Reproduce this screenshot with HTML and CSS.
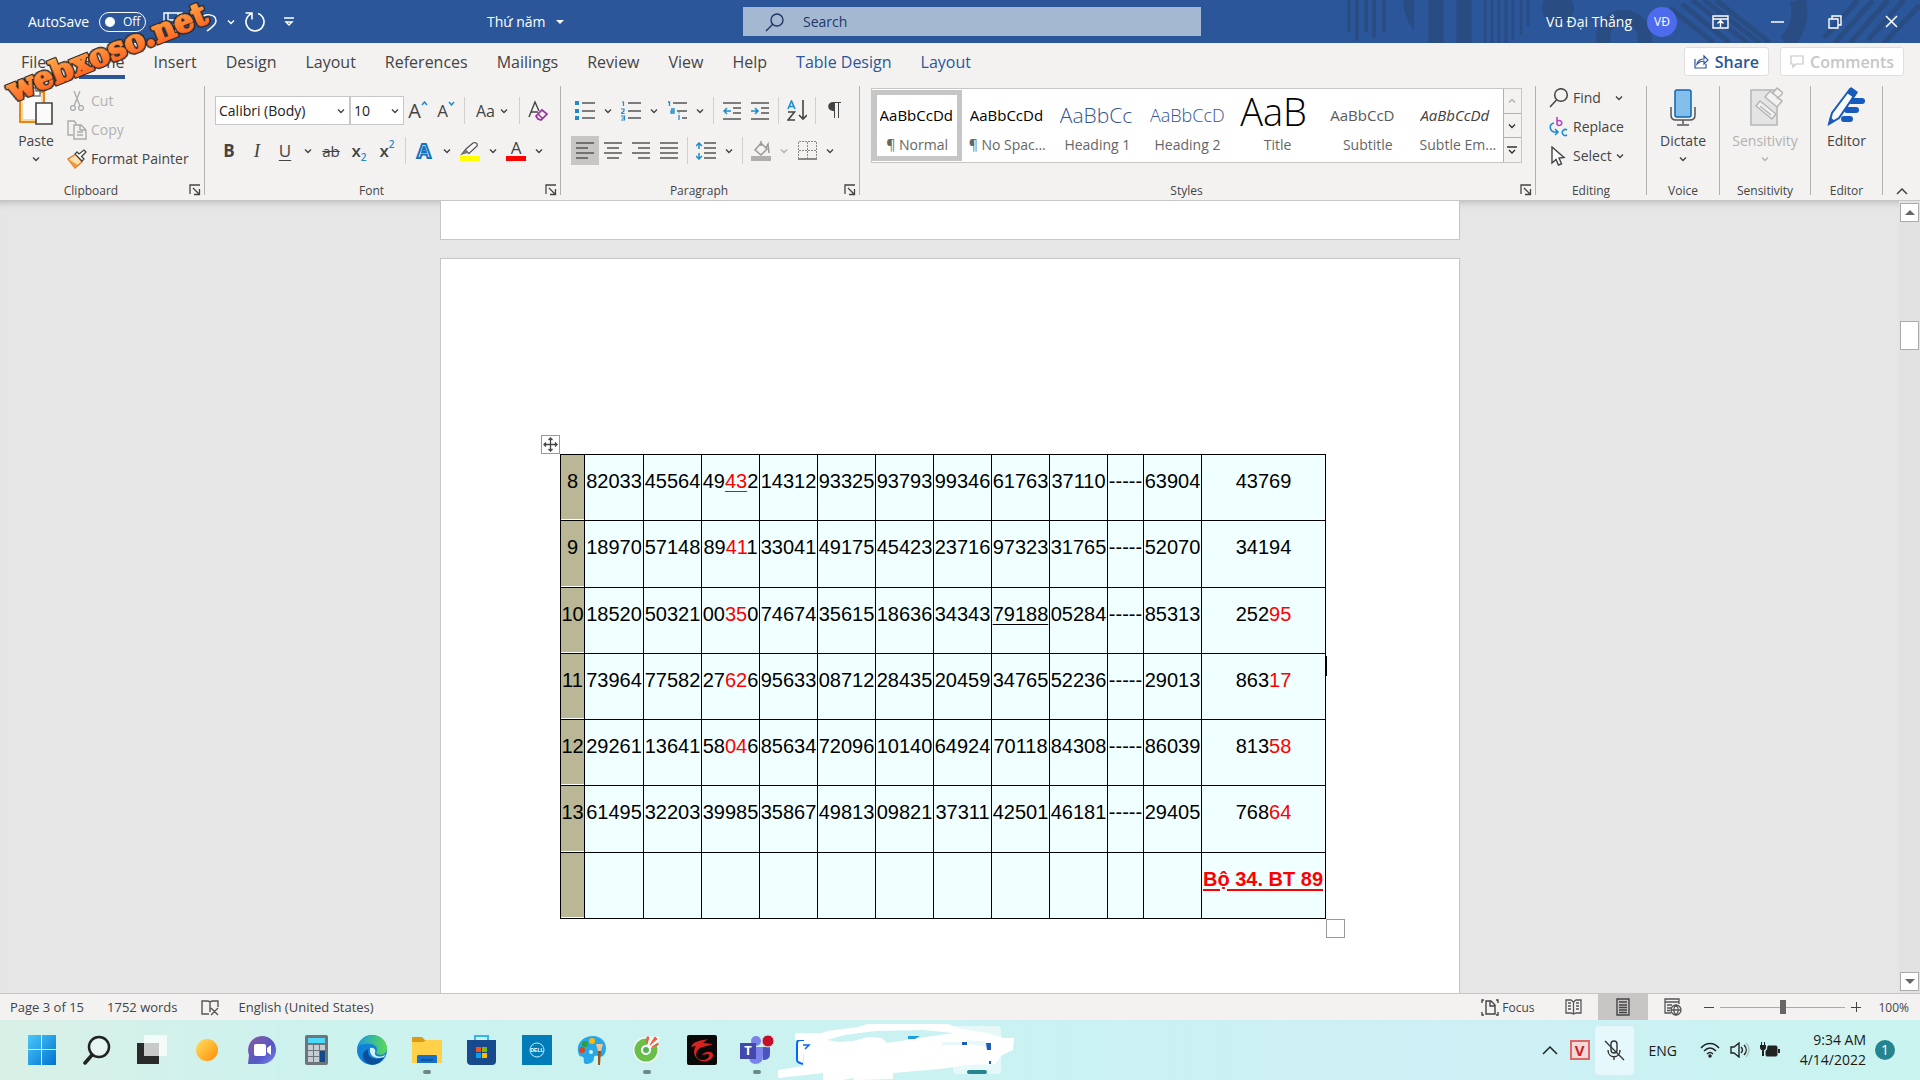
FILE: index.html
```html
<!DOCTYPE html>
<html lang="vi">
<head>
    <meta charset="UTF-8">
    <meta name="viewport" content="width=device-width, initial-scale=1.0">
    <title>Thứ năm - Word</title>
    <link rel="stylesheet" href="styles.css">
</head>
<body>
    <!-- Shared icons -->
    <svg class="defs" width="0" height="0">
        <symbol id="chev" viewBox="0 0 8 6"><path d="M1 1.5l3 3 3-3" fill="none" stroke="currentColor" stroke-width="1.4"/></symbol>
        <symbol id="launch" viewBox="0 0 12 12"><path d="M1 10V1h10M4 4l6 6M10.500 5v5.500H5" fill="none" stroke="currentColor" stroke-width="1.300"/></symbol>
    </svg>

    <header class="titlebar">
        <svg class="titlebar-art" width="580" height="43" viewBox="0 0 580 43" fill="none" stroke="#294c83">
            <path d="M9 0v32M17 0v41M26 0v32M34 0v38M44 0v32" stroke-width="4"/>
            <path d="M63 0h11v31Q64 18 63 0z" fill="#294c83" stroke="none"/>
            <path d="M96 0v43M124 0v43" stroke-width="15"/>
            <path d="M145 0v43M152 0v43M159 0v43M166 0v43M173 0v40M181 0v35M188 0v26" stroke-width="3"/>
            <circle cx="218" cy="8" r="16" fill="#294c83" stroke="none"/>
            <circle cx="284" cy="38" r="21" stroke-width="14"/>
            <path d="M330 8l44 35M342 4l48 39M352 0l56 43M364 0l56 43M376 0l54 43" stroke-width="5"/>
            <path d="M458 0Q464 24 446 43" stroke-width="16"/>
            <path d="M484 38l34-38M495 43l38-43M510 43l38-43M528 40l36-40M544 43l36-38" stroke-width="5"/>
        </svg>
        <div class="quick">
            <span>AutoSave</span>
            <button class="toggle" aria-label="AutoSave"><i></i>Off</button>
            <button class="qbtn" aria-label="Save"><svg width="20" height="20" viewBox="0 0 20 20" fill="none" stroke="#fff" stroke-width="1.400"><path d="M1 1h18v18H4l-3-3zM5 1v7h10V1M6 19v-6h8v6"/></svg></button>
            <button class="qbtn" aria-label="Undo"><svg width="20" height="20" viewBox="0 0 20 20" fill="none" stroke="#fff" stroke-width="1.500"><path d="M2 1v7h7M2 8C8 0 19 2 19 9c0 4-4 6-9 10"/></svg></button>
            <button class="qbtn small" aria-label="Undo list"><svg width="8" height="6"><use href="#chev"/></svg></button>
            <button class="qbtn" aria-label="Redo"><svg width="22" height="22" viewBox="0 0 22 22" fill="none" stroke="#fff" stroke-width="1.600"><path d="M1.500 2H8v6.500M8 2.500A9 9 0 1 0 14 2.500"/></svg></button>
            <button class="qbtn" aria-label="Customize"><svg width="10" height="10" viewBox="0 0 10 10" fill="none" stroke="#fff" stroke-width="1.400"><path d="M0 1h10M2 5l3 3 3-3z"/></svg></button>
        </div>
        <div class="doc-name">Thứ năm <svg width="8" height="4" viewBox="0 0 8 4"><path d="M0 0h8l-4 4z" fill="#fff"/></svg></div>
        <label class="search">
            <svg width="20" height="20" viewBox="0 0 20 20" fill="none" stroke="#1b3868" stroke-width="1.400"><circle cx="12" cy="8" r="6"/><path d="M8 12l-7 7"/></svg>
            <input type="text" placeholder="Search" aria-label="Search">
        </label>
        <div class="user">
            <span>Vũ Đại Thắng</span>
            <span class="avatar">VĐ</span>
        </div>
        <div class="winbtns">
            <button aria-label="Ribbon display"><svg width="17" height="14" viewBox="0 0 17 14" fill="none" stroke="#fff" stroke-width="1.400"><path d="M1 1h15v12H1zM1 4h15M8.500 12V6M5.500 8.500l3-3 3 3"/></svg></button>
            <button aria-label="Minimize"><svg width="13" height="13"><path d="M0 7h13" stroke="#fff" stroke-width="1.500"/></svg></button>
            <button aria-label="Restore"><svg width="14" height="14" viewBox="0 0 14 14" fill="none" stroke="#fff" stroke-width="1.400"><path d="M1 4h9v9H1zM4 4V1h9v9h-3"/></svg></button>
            <button aria-label="Close"><svg width="13" height="13" viewBox="0 0 13 13"><path d="M1 1l11 11M12 1L1 12" stroke="#fff" stroke-width="1.500"/></svg></button>
        </div>
    </header>

    <nav class="tabs">
        <a href="#" class="file">File</a>
        <a href="#" class="active">Home</a>
        <a href="#">Insert</a>
        <a href="#">Design</a>
        <a href="#">Layout</a>
        <a href="#">References</a>
        <a href="#">Mailings</a>
        <a href="#">Review</a>
        <a href="#">View</a>
        <a href="#">Help</a>
        <a href="#" class="context">Table Design</a>
        <a href="#" class="context">Layout</a>
        <div class="tab-actions">
            <button class="share"><svg width="15" height="15" viewBox="0 0 15 15" fill="none" stroke="#2b579a" stroke-width="1.200"><path d="M1 5v9h11v-4M3 10c1-4 3-5 7-5V2l4 4-4 4V7c-3 0-5 1-7 3z"/></svg>Share</button>
            <button class="comments"><svg width="14" height="14" viewBox="0 0 14 14" fill="none" stroke="#c6c6c6" stroke-width="1.200"><path d="M1 1h12v8H6l-3 3V9H1z"/></svg>Comments</button>
        </div>
    </nav>

    <section class="ribbon">
        <div class="group clipboard">
            <div class="group-body">
                <button class="big paste">
                    <svg width="36" height="40" viewBox="0 0 36 40"><path d="M2 6h24v30H2z" fill="#fbfbfb" stroke="#e8861a" stroke-width="2"/><path d="M4 8h20v26H4z" fill="none" stroke="#fbd79a" stroke-width="2"/><path d="M6 10V5h4c0-5 8-5 8 0h4v5z" fill="#fff" stroke="#777" stroke-width="1.400"/><path d="M18 17h16v21H18z" fill="#fafafa" stroke="#444" stroke-width="1.600"/></svg>
                    Paste
                    <svg width="8" height="6"><use href="#chev"/></svg>
                </button>
                <div class="stack">
                    <button class="off"><svg width="20" height="20" viewBox="0 0 20 20" fill="none" stroke="#aaa" stroke-width="1.300"><circle cx="6" cy="17" r="2.400"/><circle cx="14" cy="17" r="2.400"/><path d="M7 15l6-15M13 15L7 0"/></svg>Cut</button>
                    <button class="off"><svg width="20" height="20" viewBox="0 0 20 20" fill="none" stroke="#aaa" stroke-width="1.400"><path d="M6 15H1V1h6l2 2v2M7 5h7l5 5v9H7zM13 5v5h6M10 12h6M10 15h6"/></svg>Copy</button>
                    <button><svg width="20" height="20" viewBox="0 0 20 20"><path d="M9 5L1 10l7 9 7-6z" fill="#fce0b5" stroke="#e07a1f" stroke-width="1.400"/><path d="M1 10l7 9 3-3z" fill="#f09a3c"/><path d="M8 5l7 7 2-2-2.500-2.500L19 3l-2-2-5 4-2-2z" fill="#fff" stroke="#444" stroke-width="1.300"/></svg>Format Painter</button>
                </div>
            </div>
            <div class="group-name has-launcher">Clipboard<svg width="12" height="12"><use href="#launch"/></svg></div>
        </div>

        <div class="group font">
            <div class="group-body rows">
                <div class="row">
                    <select class="font-name" aria-label="Font"><option>Calibri (Body)</option></select>
                    <select class="font-size" aria-label="Font size"><option>10</option></select>
                    <button class="ib glyph big-a" aria-label="Grow font">A<svg width="7" height="5" viewBox="0 0 7 5"><path d="M1 4l2.500-3L6 4" fill="none" stroke="#1e8bcd" stroke-width="1.500"/></svg></button>
                    <button class="ib glyph" aria-label="Shrink font">A<svg width="7" height="5" viewBox="0 0 7 5"><path d="M1 1l2.500 3L6 1" fill="none" stroke="#1e8bcd" stroke-width="1.500"/></svg></button>
                    <span class="sep"></span>
                    <button class="case" aria-label="Change case">Aa<svg width="8" height="6"><use href="#chev"/></svg></button>
                    <span class="sep"></span>
                    <button class="ib" aria-label="Clear formatting"><svg width="21" height="22" viewBox="0 0 21 22" fill="none" stroke="#444" stroke-width="1.400"><path d="M1 17L7 2l4 9M3 12h7"/><path d="M8 16l6-6 5 4-6 6-3-1z" fill="#f3f2f1" stroke="#9a2fa4" stroke-width="1.700"/><path d="M10 14l5 5" stroke="#9a2fa4"/></svg></button>
                </div>
                <div class="row">
                    <button class="ib glyph bold">B</button>
                    <button class="ib glyph italic">I</button>
                    <button class="ib glyph under">U</button>
                    <button class="cb" aria-label="Underline styles"><svg width="8" height="6"><use href="#chev"/></svg></button>
                    <button class="ib glyph strike">ab</button>
                    <button class="ib glyph script">x<sub>2</sub></button>
                    <button class="ib glyph script">x<sup>2</sup></button>
                    <span class="sep"></span>
                    <button class="ib glyph effect">A</button>
                    <button class="cb" aria-label="Text effects"><svg width="8" height="6"><use href="#chev"/></svg></button>
                    <button class="ib" aria-label="Highlight"><svg width="20" height="21" viewBox="0 0 20 21"><path d="M0 16h20v5H0z" fill="#ff0"/><path d="M2 14l5-2 2 1.500L17 6c1-3-2-4-4-3L6 9z" fill="#f8f8f8" stroke="#555" stroke-width="1.300"/><path d="M2 14l4-5 3 4z" fill="#777"/></svg></button>
                    <button class="cb" aria-label="Highlight colors"><svg width="8" height="6"><use href="#chev"/></svg></button>
                    <button class="ib glyph color">A</button>
                    <button class="cb" aria-label="Font colors"><svg width="8" height="6"><use href="#chev"/></svg></button>
                </div>
            </div>
            <div class="group-name has-launcher">Font<svg width="12" height="12"><use href="#launch"/></svg></div>
        </div>

        <div class="group paragraph">
            <div class="group-body rows">
                <div class="row">
                    <button class="ib" aria-label="Bullets"><svg width="20" height="20" viewBox="0 0 20 20"><path d="M0 0h4v4H0zM0 8h4v4H0zM0 15h4v4H0z" fill="#1e8bcd"/><path d="M7 2h13M7 10h13M7 17h13" stroke="#555" stroke-width="1.500"/></svg></button>
                    <button class="cb" aria-label="Bullet library"><svg width="8" height="6"><use href="#chev"/></svg></button>
                    <button class="ib" aria-label="Numbering"><svg width="20" height="20" viewBox="0 0 20 20"><path d="M1 1h1.500v4M0 8h3v2L0 12.500h3.500M0 15h3.500v4H0M1 17h2" fill="none" stroke="#1e8bcd" stroke-width="1.200"/><path d="M7 2h13M7 10h13M7 17h13" stroke="#555" stroke-width="1.500"/></svg></button>
                    <button class="cb" aria-label="Number library"><svg width="8" height="6"><use href="#chev"/></svg></button>
                    <button class="ib" aria-label="Multilevel list"><svg width="20" height="20" viewBox="0 0 20 20"><path d="M1 1h1.500v4M4 8h3v4H4v-2h3M12 14v5M12 11.500v1" fill="none" stroke="#1e8bcd" stroke-width="1.300"/><path d="M6 2h14M10 10h10M15 17h5" stroke="#555" stroke-width="1.500"/></svg></button>
                    <button class="cb" aria-label="List library"><svg width="8" height="6"><use href="#chev"/></svg></button>
                    <span class="sep"></span>
                    <button class="ib" aria-label="Decrease indent"><svg width="18" height="18" viewBox="0 0 18 18" fill="none"><path d="M0 1h18M10 6h8M10 11h8M0 17h18" stroke="#555" stroke-width="1.500"/><path d="M8 9H1M4 6L1 9l3 3" stroke="#1e8bcd" stroke-width="1.500"/></svg></button>
                    <button class="ib" aria-label="Increase indent"><svg width="18" height="18" viewBox="0 0 18 18" fill="none"><path d="M0 1h18M10 6h8M10 11h8M0 17h18" stroke="#555" stroke-width="1.500"/><path d="M0 9h7M4 6l3 3-3 3" stroke="#1e8bcd" stroke-width="1.500"/></svg></button>
                    <span class="sep"></span>
                    <button class="ib" aria-label="Sort"><svg width="20" height="21" viewBox="0 0 20 21" fill="none" stroke-width="1.600"><path d="M1 9l3.500-8L8 9M2 6.500h5" stroke="#1e8bcd"/><path d="M1 12h6.500L1 20h7M16 0v19M12 15l4 4 4-4" stroke="#444"/></svg></button>
                    <span class="sep"></span>
                    <button class="ib" aria-label="Show marks"><svg width="13" height="17" viewBox="0 0 13 17"><path d="M6 9C-2 9-1 0 5 0h8v1h-2v15h-1V1H7v15H6z" fill="#444"/></svg></button>
                </div>
                <div class="row">
                    <button class="ib on" aria-label="Align left"><svg width="18" height="18" viewBox="0 0 18 18"><path d="M0 1h18M0 6h12M0 11h18M0 16h12" stroke="#555" stroke-width="1.500"/></svg></button>
                    <button class="ib" aria-label="Center"><svg width="18" height="18" viewBox="0 0 18 18"><path d="M0 1h18M3 6h12M0 11h18M3 16h12" stroke="#555" stroke-width="1.500"/></svg></button>
                    <button class="ib" aria-label="Align right"><svg width="18" height="18" viewBox="0 0 18 18"><path d="M0 1h18M6 6h12M0 11h18M6 16h12" stroke="#555" stroke-width="1.500"/></svg></button>
                    <button class="ib" aria-label="Justify"><svg width="18" height="18" viewBox="0 0 18 18"><path d="M0 1h18M0 6h18M0 11h18M0 16h18" stroke="#555" stroke-width="1.500"/></svg></button>
                    <span class="sep"></span>
                    <button class="ib" aria-label="Line spacing"><svg width="20" height="18" viewBox="0 0 20 18" fill="none"><path d="M8 1h12M8 6h12M8 11h12M8 16h12" stroke="#555" stroke-width="1.500"/><path d="M3 1v6M0 4l3-3 3 3M3 17v-6M0 14l3 3 3-3" stroke="#1e8bcd" stroke-width="1.500"/></svg></button>
                    <button class="cb" aria-label="Spacing options"><svg width="8" height="6"><use href="#chev"/></svg></button>
                    <span class="sep"></span>
                    <button class="ib" aria-label="Shading"><svg width="20" height="20" viewBox="0 0 20 20"><path d="M0 15h20v5H0z" fill="#b1adab"/><path d="M4 9l6-7 6 6-6 6zM10 5V0M15 7l2-4 1 9" fill="none" stroke="#999" stroke-width="1.500"/></svg></button>
                    <button class="cb dim" aria-label="Shading colors"><svg width="8" height="6"><use href="#chev"/></svg></button>
                    <button class="ib" aria-label="Borders"><svg width="19" height="19" viewBox="0 0 19 19" fill="none" stroke="#888"><path d="M.5 18V.500h18V18M9.500 1v16M1 9.500h17" stroke-dasharray="2 1"/><path d="M0 18h19" stroke-width="2"/></svg></button>
                    <button class="cb" aria-label="Border options"><svg width="8" height="6"><use href="#chev"/></svg></button>
                </div>
            </div>
            <div class="group-name has-launcher">Paragraph<svg width="12" height="12"><use href="#launch"/></svg></div>
        </div>

        <div class="group styles">
            <div class="group-body">
                <div class="gallery">
                    <button class="style selected"><span class="sample">AaBbCcDd</span><span>¶ Normal</span></button>
                    <button class="style"><span class="sample">AaBbCcDd</span><span>¶ No Spac...</span></button>
                    <button class="style"><span class="sample h1">AaBbCc</span><span>Heading 1</span></button>
                    <button class="style"><span class="sample h2">AaBbCcD</span><span>Heading 2</span></button>
                    <button class="style"><span class="sample title">AaB</span><span>Title</span></button>
                    <button class="style"><span class="sample subtitle">AaBbCcD</span><span>Subtitle</span></button>
                    <button class="style"><span class="sample subtle">AaBbCcDd</span><span>Subtle Em...</span></button>
                    <div class="gallery-nav">
                        <button class="dim" aria-label="Previous"><svg class="flip" width="8" height="6"><use href="#chev"/></svg></button>
                        <button aria-label="Next"><svg width="8" height="6"><use href="#chev"/></svg></button>
                        <button aria-label="More styles"><svg width="10" height="9" viewBox="0 0 10 9" fill="none" stroke="#333" stroke-width="1.400"><path d="M0 1h10M2 4l3 3 3-3"/></svg></button>
                    </div>
                </div>
            </div>
            <div class="group-name has-launcher">Styles<svg width="12" height="12"><use href="#launch"/></svg></div>
        </div>

        <div class="group editing">
            <div class="group-body">
                <div class="stack">
                    <button><svg width="20" height="20" viewBox="0 0 20 20" fill="none" stroke="#444" stroke-width="1.500"><circle cx="12" cy="7" r="6.300"/><path d="M7.500 12L1 19"/></svg>Find<svg class="far" width="8" height="6"><use href="#chev"/></svg></button>
                    <button><svg width="20" height="20" viewBox="0 0 20 20" fill="none" stroke-width="1.600"><path d="M8 0v8M8 5a2.500 2.500 0 1 1 0 2" stroke="#b24bc0"/><path d="M5 6C0 7 0 13 5 15h4M6 12l3 3-3 3M18 13a3 3 0 1 0 0 5" stroke="#1e8bcd"/></svg>Replace</button>
                    <button><svg width="20" height="20" viewBox="0 0 20 20"><path d="M3 1v16l4-3.500 2.500 5.500 3-1.200L10 12l5-.500z" fill="#fff" stroke="#444" stroke-width="1.400"/></svg>Select<svg width="8" height="6"><use href="#chev"/></svg></button>
                </div>
            </div>
            <div class="group-name">Editing</div>
        </div>

        <div class="group voice">
            <div class="group-body">
                <button class="big">
                    <svg width="26" height="40" viewBox="0 0 26 40" fill="none"><rect x="5" y="4" width="16" height="27" rx="2" fill="#83beec" stroke="#1065ab" stroke-width="1.500"/><path d="M1 21v8q0 5 5 5h14q5 0 5-5v-8M13 34v4M7 39h12" stroke="#555" stroke-width="1.500"/></svg>
                    Dictate
                    <svg width="8" height="6"><use href="#chev"/></svg>
                </button>
            </div>
            <div class="group-name">Voice</div>
        </div>

        <div class="group sensitivity">
            <div class="group-body">
                <button class="big off">
                    <svg width="36" height="40" viewBox="0 0 36 40" fill="#e4e4e4" stroke="#b5b5b5" stroke-width="1.500"><path d="M4 4h26v35H4z"/><path d="M9 20l4-5 16 13-4 5zM13 20l11 9" fill="#f3f2f1"/><path d="M18 11l5-6 12 10-5 6zM25 8l5-6 6 5-6 6" fill="#f3f2f1"/></svg>
                    Sensitivity
                    <svg width="8" height="6"><use href="#chev"/></svg>
                </button>
            </div>
            <div class="group-name">Sensitivity</div>
        </div>

        <div class="group editor">
            <div class="group-body">
                <button class="big">
                    <svg width="40" height="40" viewBox="0 0 40 40"><path d="M24 15h11M20 24h9M17 33h6" stroke="#185abd" stroke-width="6" stroke-linecap="round"/><path d="M2 38l3-11L23 3l6 4-17 25z" fill="#fafafa" stroke="#185abd" stroke-width="2"/><path d="M20 7l4-6 7 5-4 6z" fill="#185abd"/><path d="M1 39l2-8 5 4z" fill="#185abd"/></svg>
                    Editor
                </button>
            </div>
            <div class="group-name">Editor</div>
        </div>
        <button class="collapse" aria-label="Collapse ribbon"><svg width="12" height="7" viewBox="0 0 12 7"><path d="M1 6l5-5 5 5" fill="none" stroke="#444" stroke-width="1.500"/></svg></button>
    </section>

    <main class="workspace">
        <div class="canvas">
            <div class="page page-prev"></div>
            <div class="page page-current">
                <div class="table-wrap">
                    <span class="move-handle"><svg width="15" height="15" viewBox="0 0 15 15" fill="none" stroke="#444" stroke-width="1.300"><path d="M7.500 1v13M1 7.500h13M5.500 3l2-2 2 2M5.500 12l2 2 2-2M3 5.500l-2 2 2 2M12 5.500l2 2-2 2"/></svg></span>
                    <table>
                        <colgroup><col class="c-day"><col class="c-first"><col span="8" class="c-num"><col class="c-dash"><col class="c-num"><col class="c-last"></colgroup>
                        <tbody>
                            <tr><th>8</th><td>82033</td><td>45564</td><td>49<u class="red">43</u>2</td><td>14312</td><td>93325</td><td>93793</td><td>99346</td><td>61763</td><td>37110</td><td>-----</td><td>63904</td><td>43769</td></tr>
                            <tr><th>9</th><td>18970</td><td>57148</td><td>89<span class="red">41</span>1</td><td>33041</td><td>49175</td><td>45423</td><td>23716</td><td>97323</td><td>31765</td><td>-----</td><td>52070</td><td>34194</td></tr>
                            <tr><th>10</th><td>18520</td><td>50321</td><td>00<span class="red">35</span>0</td><td>74674</td><td>35615</td><td>18636</td><td>34343</td><td><u>79188</u></td><td>05284</td><td>-----</td><td>85313</td><td>252<span class="red">95</span></td></tr>
                            <tr><th>11</th><td>73964</td><td>77582</td><td>27<span class="red">62</span>6</td><td>95633</td><td>08712</td><td>28435</td><td>20459</td><td>34765</td><td>52236</td><td>-----</td><td>29013</td><td>863<span class="red">17</span></td></tr>
                            <tr><th>12</th><td>29261</td><td>13641</td><td>58<span class="red">04</span>6</td><td>85634</td><td>72096</td><td>10140</td><td>64924</td><td>70118</td><td>84308</td><td>-----</td><td>86039</td><td>813<span class="red">58</span></td></tr>
                            <tr><th>13</th><td>61495</td><td>32203</td><td>39985</td><td>35867</td><td>49813</td><td>09821</td><td>37311</td><td>42501</td><td>46181</td><td>-----</td><td>29405</td><td>768<span class="red">64</span></td></tr>
                            <tr><th></th><td></td><td></td><td></td><td></td><td></td><td></td><td></td><td></td><td></td><td></td><td></td><td class="result"><u>Bộ 34. BT 89</u></td></tr>
                        </tbody>
                    </table>
                    <span class="caret"></span>
                    <span class="resize-handle"></span>
                </div>
            </div>
        </div>
        <div class="scrollbar">
            <button aria-label="Scroll up"><svg width="10" height="5" viewBox="0 0 10 5"><path d="M0 5l5-5 5 5z" fill="#666"/></svg></button>
            <span class="thumb"></span>
            <button aria-label="Scroll down"><svg width="10" height="5" viewBox="0 0 10 5"><path d="M0 0l5 5 5-5z" fill="#666"/></svg></button>
        </div>
    </main>

    <footer class="status">
        <span class="pages">Page 3 of 15</span>
        <span class="words">1752 words</span>
        <svg class="proof" width="18" height="17" viewBox="0 0 18 17" fill="none" stroke="#555" stroke-width="1.400"><path d="M8 15H1V2h6l2 1 2-1h6v6M9 3v10M10 9l7 7M17 9l-7 7"/></svg>
        <span>English (United States)</span>
        <div class="views">
            <button class="focus"><svg width="18" height="17" viewBox="0 0 18 17" fill="none" stroke="#444" stroke-width="1.400"><path d="M3 1H1v3M1 13v3h2M15 1h2v3M17 13v3h-2M5 2h5l4 4v9H5zM9 2v5h5"/></svg>Focus</button>
            <button class="view" aria-label="Read mode"><svg width="17" height="16" viewBox="0 0 17 16" fill="none" stroke="#555" stroke-width="1.300"><path d="M8.500 3L6 1H1v13h5l2.500 1L11 14h5V1h-5zM8.500 3v12M3 4h3M3 7h3M3 10h3M11 4h3M11 7h3M11 10h3"/></svg></button>
            <button class="view on" aria-label="Print layout"><svg width="14" height="18" viewBox="0 0 14 18" fill="none" stroke="#444" stroke-width="1.400"><path d="M1 1h12v16H1zM3 4h8M3 7h8M3 9.500h8M3 12h8M3 14.500h8"/></svg></button>
            <button class="view" aria-label="Web layout"><svg width="18" height="18" viewBox="0 0 18 18" fill="none" stroke="#555" stroke-width="1.300"><path d="M7 15H1V1h14v5M1 4h14M3 7h5M3 10h4M3 12.500h3"/><circle cx="12" cy="12" r="5"/><path d="M7 12h10M12 7c-3 3-3 7 0 10M12 7c3 3 3 7 0 10"/></svg></button>
            <button class="zoom-step" aria-label="Zoom out"><svg width="10" height="10"><path d="M0 5.500h10" stroke="#444"/></svg></button>
            <input type="range" min="0" max="100" value="50" aria-label="Zoom">
            <button class="zoom-step" aria-label="Zoom in"><svg width="10" height="10"><path d="M0 5.500h10M5.500 0v10" stroke="#444"/></svg></button>
            <span class="percent">100%</span>
        </div>
    </footer>

    <div class="taskbar">
        <div class="apps">
            <button class="app" aria-label="Start"><svg width="30" height="30" viewBox="0 0 30 30"><defs><linearGradient id="win" x1="0" y1="0" x2="1" y2="1"><stop offset="0" stop-color="#4cc8fb"/><stop offset="1" stop-color="#0072d0"/></linearGradient></defs><path d="M1 0h13v14H1zM15 0h14v14H15zM1 15h13v15H1zM15 15h14v15H15z" fill="url(#win)"/></svg></button>
            <button class="app" aria-label="Search"><svg width="30" height="30" viewBox="0 0 30 30" fill="none" stroke="#222" stroke-linecap="round"><circle cx="17" cy="12" r="10" stroke-width="2.500" fill="#e4f5f2"/><path d="M10 20l-7 8" stroke-width="3.500"/></svg></button>
            <button class="app" aria-label="Task view"><svg width="30" height="30" viewBox="0 0 30 30"><path d="M0 8h22v21H0z" fill="#2a2a2a"/><path d="M7 0h23v21H7z" fill="#fff" opacity=".75"/></svg></button>
            <button class="app" aria-label="Weather"><svg width="30" height="30" viewBox="0 0 30 30"><defs><linearGradient id="sun" x1="0" y1="0" x2="1" y2="1"><stop offset="0" stop-color="#ffe066"/><stop offset="1" stop-color="#ff8c00"/></linearGradient></defs><circle cx="15" cy="15" r="11" fill="url(#sun)"/></svg></button>
            <button class="app" aria-label="Chat"><svg width="30" height="30" viewBox="0 0 30 30"><defs><linearGradient id="chat" x1="0" y1="0" x2="1" y2="1"><stop offset="0" stop-color="#8b5a9e"/><stop offset=".6" stop-color="#5558c8"/><stop offset="1" stop-color="#7b83eb"/></linearGradient></defs><path d="M1 29l1-9A14 14 0 1 1 15 29z" fill="url(#chat)"/><rect x="7" y="9" width="12" height="12" rx="2" fill="#fff"/><path d="M20 13l4-3v10l-4-3z" fill="#fff"/></svg></button>
            <button class="app" aria-label="Calculator"><svg width="30" height="30" viewBox="0 0 30 30"><rect x="3" y="0" width="23" height="30" rx="2" fill="#6d747b"/><path d="M6 3h17v5H6z" fill="#4cd9f8"/><path d="M6 10h5v5H6zM12 10h5v5h-5zM18 10h5v5h-5zM6 16h5v5H6zM12 16h5v5h-5zM6 22h5v5H6zM12 22h5v5h-5z" fill="#c4ccd4"/><path d="M18 16h5v11h-5z" fill="#114a8b"/></svg></button>
            <button class="app" aria-label="Edge"><svg width="30" height="30" viewBox="0 0 30 30"><defs><linearGradient id="edge" x1="0" y1="0" x2="1" y2="0"><stop offset="0" stop-color="#1b9de2"/><stop offset="1" stop-color="#5bd94f"/></linearGradient></defs><circle cx="15" cy="15" r="15" fill="#1381d5"/><path d="M1 11C5-4 29-3 30 13c0 8-9 8-11 5 3-5-1-9-6-9C8 8 3 10 1 11z" fill="url(#edge)"/><path d="M11 15c-1 9 8 11 16 7-4 8-13 10-18 5-5-4-4-12 4-13z" fill="#0c4e9c"/><path d="M13 13c5-1 6 3 5 5-1 4 7 5 11 1l-2 3c-9 3-15-1-14-9z" fill="#d0f2f2"/></svg></button>
            <button class="app open" aria-label="File Explorer"><svg width="30" height="30" viewBox="0 0 30 30"><path d="M0 2h10l3 3h5v8H0z" fill="#dc9a13"/><path d="M0 7h11l3-2h16v23H0z" fill="#ffd048"/><path d="M6 20h18q1 0 1 2v6H5v-6q0-2 1-2z" fill="#1470c8"/><path d="M9 25h12" stroke="#083c7c"/></svg></button>
            <button class="app" aria-label="Store"><svg width="30" height="30" viewBox="0 0 30 30"><path d="M8 7V1h13v6" fill="none" stroke="#33b5f5" stroke-width="2"/><path d="M0 5h29v21q0 4-4 4H4q-4 0-4-4z" fill="#17498c"/><path d="M9 12h5v5H9z" fill="#f25022"/><path d="M15 12h5v5h-5z" fill="#7fba00"/><path d="M9 18h5v5H9z" fill="#00a4ef"/><path d="M15 18h5v5h-5z" fill="#ffb900"/></svg></button>
            <button class="app" aria-label="Dell"><svg width="30" height="30" viewBox="0 0 30 30"><path d="M0 0h30v30H0z" fill="#007db8"/><circle cx="15" cy="15" r="7" fill="none" stroke="#cdeaf5"/><text x="15" y="17" class="dell" text-anchor="middle">DELL</text></svg></button>
            <button class="app" aria-label="Paint"><svg width="30" height="30" viewBox="0 0 30 30"><path d="M2 20C-3 8 8 0 17 1c12 1 15 14 9 20-3 2-7-2-9 1 0 5-3 7-8 7-4-1-1-5-3-7-2-1-3 0-4-2z" fill="#27a7e8"/><circle cx="15" cy="6" r="3" fill="#ffb900"/><circle cx="8" cy="9" r="3" fill="#30a030"/><circle cx="5" cy="15" r="3" fill="#d8481b"/><circle cx="14" cy="17" r="2" fill="#d0f2f2"/><path d="M21 16h3l-1 14h-2z" fill="#955621"/><path d="M19 9h7l-2 7h-3z" fill="#e8c49a"/></svg></button>
            <button class="app open" aria-label="Coc Coc"><svg width="30" height="30" viewBox="0 0 30 30"><circle cx="14" cy="15" r="13" fill="#f6faf6"/><circle cx="14" cy="15" r="8" fill="none" stroke="#6abf4b" stroke-width="7"/><path d="M14 15l2-14 12 1-2 8z" fill="#eef8f6"/><path d="M15 9V2h2zM18 10l5-8 2 2zM20 12l6-4v2z" fill="#f15a3c" stroke="#f15a3c"/><circle cx="14" cy="15" r="4" fill="#52b356" stroke="#fff" stroke-width="2"/></svg></button>
            <button class="app" aria-label="Garena"><svg width="30" height="30" viewBox="0 0 30 30"><rect width="30" height="30" rx="2" fill="#080808"/><path d="M4 12C7 5 14 6 21 4l-5 4 10 1c-8 3-12 2-15 6-4 5-1 10 5 10 5 0 8-5 5-6l-6 1c2-4 12-5 11 1-1 5-9 7-14 4C6 21 6 15 9 11z" fill="#d8221f"/></svg></button>
            <button class="app open" aria-label="Teams"><svg width="36" height="30" viewBox="0 0 36 30"><circle cx="17" cy="6" r="5" fill="#7b83eb"/><path d="M23 12h8v7q0 6-7 6z" fill="#4b53bc"/><path d="M10 12h14v9q0 8-8 8-6-1-6-7z" fill="#7b83eb"/><path d="M1 8h16v16H1z" fill="#4348ad"/><text x="9" y="20" class="teams" text-anchor="middle">T</text><circle cx="29" cy="6" r="6" fill="#c50f2b" stroke="#ddd"/></svg></button>
            <button class="app word" aria-label="Word"></button>
        </div>
        <!-- White strokes over the last pinned apps -->
        <svg class="scribble" width="240" height="56" viewBox="0 0 240 56">
            <path d="M28 16h-6q-3 0-3 4v16q0 3 7 4z" fill="#fff" stroke="#0068ff" stroke-width="2"/>
            <path d="M17 9h27l5-2 31-4 9-3h81l14 5 25 4 16 5h11l-1 12-11 5-7 9-28 1-27 4-47 4v6l-39 1-1-2-10 2H45v-7L0 54v-8l25-4 1-26h-9z" fill="#fff"/>
            <path d="M49 16l17-5 32-4 47-1 31 3-21 3-46 7-5-5-14-1-15 4-14 1z" fill="#caf2f2"/>
            <path d="M164 18h19v3h-19zM188 16l22 2-1 5-18-3z" fill="#e6f8f8"/>
            <path d="M130 12h12l-5 3h-7z" fill="#1f9fe0"/>
            <path d="M25 21h6l-4 4" fill="none" stroke="#0068ff" stroke-width="1.500"/>
            <path d="M184 18h5v3h-5zM208 19h5v7h-4zM211 37h2v3h-2z" fill="#1d5bb8"/>
        </svg>
        <div class="tray">
            <button class="tray-up" aria-label="Hidden icons"><svg width="16" height="10" viewBox="0 0 16 10"><path d="M1 9l7-7 7 7" fill="none" stroke="#222" stroke-width="1.500"/></svg></button>
            <span class="unikey">V</span>
            <button class="mic" aria-label="Microphone"><svg width="21" height="21" viewBox="0 0 21 21" fill="none" stroke="#333" stroke-width="1.400"><rect x="7" y="1" width="6" height="12" rx="3"/><path d="M4 10c0 9 12 9 12 0M10 17v3M1 1l19 19"/></svg></button>
            <span class="lang">ENG</span>
            <svg class="wifi" width="20" height="16" viewBox="0 0 20 16" fill="none" stroke="#222" stroke-width="1.500"><path d="M1 6c5-6 13-6 18 0M4 9c4-4 8-4 12 0M7 12c2-2 4-2 6 0"/><circle cx="10" cy="14" r="1" fill="#222"/></svg>
            <svg class="sound" width="20" height="16" viewBox="0 0 20 16" fill="none" stroke="#222" stroke-width="1.400"><path d="M1 5h3l5-4v14l-5-4H1zM11 5c2 2 2 4 0 6M14 3c3 3 3 7 0 10"/><path d="M16 1c4 4 4 10 0 14" stroke="#a9c4c4"/></svg>
            <svg class="battery" width="20" height="16" viewBox="0 0 20 16"><path d="M8 4h8q1 0 1 1v8q0 1-1 1H7q-1 0-1-1V9q2-1 2-5z" fill="#222" stroke="#222"/><path d="M18 7h2v4h-2zM0 3h6v2q0 3-2 3v6H2V8Q0 8 0 5zM1 0h1v3H1zM4 0h1v3H4z" fill="#222"/></svg>
            <div class="clock"><span>9:34 AM</span><span>4/14/2022</span></div>
            <span class="badge">1</span>
        </div>
    </div>

    <!-- Site watermark -->
    <svg class="watermark" width="230" height="120" viewBox="0 0 230 120">
        <defs><linearGradient id="wm" x1="0" y1="0" x2="0" y2="1"><stop offset="0" stop-color="#ffb04d"/><stop offset="1" stop-color="#ff5a1c"/></linearGradient></defs>
        <text x="13" y="102" transform="rotate(-22 13 102)">webxoso.net</text>
    </svg>
</body>
</html>
```
FILE: styles.css
```css
* {
    box-sizing: border-box;
}

body {
    margin: 0;
    height: 100vh;
    display: flex;
    flex-direction: column;
    overflow: hidden;
    font-family: "Open Sans", "Noto Sans", sans-serif;
    font-size: 14px;
    color: #444;
    background: #f3f2f1;
}

button {
    font: inherit;
    color: inherit;
    background: none;
    border: 0;
    padding: 0;
    display: flex;
    align-items: center;
    justify-content: center;
}

svg {
    display: block;
    flex: none;
}

.defs {
    position: absolute;
}

/* Title bar */
.titlebar {
    position: relative;
    height: 43px;
    flex: none;
    display: grid;
    grid-template-columns: 487px 256px minmax(200px, 458px) 1fr auto;
    align-items: center;
    background: #2b579a;
    color: #fff;
}

.titlebar > * {
    position: relative;
}

.titlebar .titlebar-art {
    position: absolute;
    right: 0;
    top: 0;
}

.quick {
    display: flex;
    align-items: center;
    padding-left: 28px;
}

.toggle {
    width: 47px;
    height: 20px;
    margin: 0 10px;
    gap: 8px;
    border: 1px solid #fff;
    border-radius: 10px;
    font-size: 12px;
}

.toggle i {
    width: 10px;
    height: 10px;
    border-radius: 5px;
    background: #fff;
}

.qbtn {
    width: 34px;
    height: 30px;
}

.qbtn.small {
    width: 14px;
}

.doc-name {
    display: flex;
    align-items: center;
    gap: 10px;
}

.search {
    height: 29px;
    display: flex;
    align-items: center;
    gap: 18px;
    padding-left: 22px;
    background: #a5b8d2;
}

.search input {
    flex: 1;
    min-width: 0;
    border: 0;
    padding: 0;
    background: none;
    font: inherit;
}

.search input::placeholder {
    color: #1b3868;
}

.user {
    display: flex;
    align-items: center;
    justify-content: flex-end;
    gap: 15px;
    padding-right: 15px;
}

.avatar {
    width: 30px;
    height: 30px;
    border-radius: 50%;
    background: #4f6bed;
    font-size: 12px;
    line-height: 30px;
    text-align: center;
}

.winbtns {
    display: flex;
}

.winbtns button {
    width: 57px;
    height: 43px;
}

/* Tabs */
.tabs {
    height: 39px;
    flex: none;
    display: flex;
    align-items: flex-start;
    gap: 1px;
    padding-left: 7px;
    font-size: 16px;
}

.tabs a {
    padding: 0 14px;
    line-height: 38px;
    color: #444;
    text-decoration: none;
}

.tabs .file {
    margin-right: 4px;
}

.tabs .active {
    position: relative;
}

.tabs .active::after {
    content: "";
    position: absolute;
    left: 14px;
    right: 14px;
    bottom: 2px;
    height: 4px;
    background: #2b579a;
}

.tabs .context {
    color: #2b579a;
}

.tab-actions {
    display: flex;
    gap: 11px;
    margin: 4px 16px 0 auto;
    font-weight: 600;
}

.tab-actions button {
    height: 29px;
    gap: 6px;
    padding: 0 9px;
    border: 1px solid #e1dfdd;
    border-radius: 3px;
    background: #fff;
    white-space: nowrap;
}

.share {
    color: #2b579a;
}

.comments {
    color: #c6c6c6;
}

/* Ribbon */
.ribbon {
    height: 119px;
    flex: none;
    display: flex;
    padding-top: 4px;
    border-bottom: 1px solid #c8c6c4;
}

.group {
    height: 109px;
    display: flex;
    flex-direction: column;
    border-right: 1px solid #b1b1b1;
}

.group-body {
    flex: 1;
    display: flex;
    align-items: flex-start;
}

.group-name {
    height: 10px;
    display: flex;
    align-items: center;
    justify-content: center;
    position: relative;
    font-size: 12px;
}

.has-launcher {
    padding-right: 22px;
}

.group-name svg {
    position: absolute;
    right: 3px;
    top: -1px;
}

.clipboard {
    width: 205px;
}

.font {
    width: 356px;
}

.paragraph {
    width: 299px;
}

.styles {
    flex: 1;
    min-width: 0;
}

.editing {
    width: 111px;
}

.voice {
    width: 73px;
}

.sensitivity {
    width: 91px;
}

.editor {
    width: 72px;
}

.big {
    flex: 1;
    flex-direction: column;
    justify-content: flex-start;
    line-height: 20px;
    gap: 5px;
}

.paste {
    flex: none;
    width: 72px;
}

.off {
    color: #b1b1b1;
}

.dim {
    color: #b1b1b1;
}

.stack {
    display: flex;
    flex-direction: column;
}

.stack button {
    height: 29px;
    justify-content: flex-start;
    gap: 4px;
}

.clipboard .stack {
    margin-left: -5px;
}

.editing .stack {
    margin: -3px 0 0 13px;
}

.editing .far {
    margin-left: 10px;
}

.rows {
    flex-direction: column;
    gap: 11px;
    padding: 10px 0 0 10px;
}

.row {
    display: flex;
    align-items: center;
    height: 29px;
}

.font-name,
.font-size {
    height: 29px;
    padding: 0 3px;
    border: 1px solid #c6c6c6;
    border-radius: 0;
    appearance: none;
    font: inherit;
    color: #222;
    background: #fff url("data:image/svg+xml,%3Csvg xmlns='http://www.w3.org/2000/svg' width='8' height='6'%3E%3Cpath d='M1 1.5l3 3 3-3' fill='none' stroke='%23444' stroke-width='1.4'/%3E%3C/svg%3E") right 4px center no-repeat;
}

.font-name {
    width: 135px;
}

.font-size {
    width: 54px;
}

.ib {
    width: 28px;
    height: 29px;
}

.cb {
    width: 18px;
    height: 29px;
}

.ib.on {
    background: #c8c6c4;
}

.sep {
    width: 1px;
    height: 27px;
    margin: 0 4px;
    background: #d2d0ce;
}

.glyph {
    font-size: 17px;
    line-height: 20px;
}

.glyph svg {
    margin-bottom: 14px;
}

.big-a {
    font-size: 20px;
}

.case {
    width: 46px;
    gap: 5px;
    font-size: 16px;
}

.bold {
    font-weight: 700;
}

.italic {
    font-family: "Liberation Serif", serif;
    font-style: italic;
    font-size: 19px;
}

.under {
    text-decoration: underline;
    text-underline-offset: 3px;
}

.strike {
    font-size: 15px;
    text-decoration: line-through;
}

.script {
    font-weight: 600;
}

.script sub,
.script sup {
    font-size: 10px;
    line-height: 10px;
    color: #1e8bcd;
}

.script sub {
    align-self: flex-end;
    margin-bottom: 3px;
}

.script sup {
    align-self: flex-start;
    margin-top: 3px;
}

.effect {
    color: #fff;
    font-size: 20px;
    font-weight: 700;
    -webkit-text-stroke: 2px #1172c0;
}

.color {
    height: 21px;
    width: 20px;
    margin: 0 4px;
    border-bottom: 5px solid #f00;
}

.gallery {
    flex: 1;
    display: flex;
    height: 75px;
    margin: 2px 13px 0 11px;
    border: 1px solid #c8c6c4;
    background: #fff;
}

.style {
    flex: 1;
    min-width: 0;
    flex-direction: column;
    justify-content: flex-start;
    height: 71px;
    margin-top: 1px;
    padding: 0 2px;
    border: 5px solid transparent;
    line-height: 20px;
    white-space: nowrap;
    color: #666;
}

.style.selected {
    border-color: #c6c6c6;
}

.sample {
    width: 75px;
    height: 40px;
    line-height: 40px;
    overflow: hidden;
    font-size: 15px;
    color: #000;
    text-align: left;
}

.sample.h1 {
    font-size: 21px;
    font-weight: 300;
    color: #2f5496;
}

.sample.h2 {
    font-size: 18px;
    font-weight: 300;
    color: #2f5496;
}

.sample.title {
    font-size: 38px;
    font-weight: 300;
    line-height: 32px;
}

.sample.subtitle {
    color: #5a5a5a;
}

.sample.subtle {
    font-style: italic;
    color: #404040;
}

.gallery-nav {
    flex: none;
    width: 18px;
    display: flex;
    flex-direction: column;
}

.gallery-nav button {
    flex: 1;
    border-left: 1px solid #b1b1b1;
    border-bottom: 1px solid #b1b1b1;
    background: #f3f2f1;
    color: #333;
}

.gallery-nav button:last-child {
    border-bottom: 0;
}

.gallery-nav .dim {
    color: #b1b1b1;
}

.flip {
    transform: rotate(180deg);
}

.collapse {
    flex: none;
    width: 37px;
    align-items: flex-end;
    height: 109px;
}

/* Document */
.workspace {
    flex: 1;
    min-height: 0;
    display: flex;
    background: #e6e6e6;
}

.canvas {
    flex: 1;
    display: flex;
    flex-direction: column;
    align-items: center;
    gap: 18px;
    overflow: hidden;
    box-shadow: inset 0 8px 8px -8px #aaa;
}

.page {
    width: 1020px;
    flex: none;
    border: 1px solid #c6c6c6;
    background: #fff;
}

.page-prev {
    height: 39px;
    border-top: 0;
}

.page-current {
    flex: 1;
    border-bottom: 0;
    padding: 195px 0 0 119px;
}

.table-wrap {
    position: relative;
    width: 766px;
}

table {
    width: 100%;
    height: 465px;
    table-layout: fixed;
    border-collapse: collapse;
    font-family: "Liberation Sans", Arial, sans-serif;
    font-size: 20px;
    line-height: 23px;
    color: #000;
}

.c-day {
    width: 24px;
}

.c-first {
    width: 59px;
}

.c-num {
    width: 58px;
}

.c-dash {
    width: 36px;
}

.c-last {
    width: 124px;
}

th,
td {
    padding: 15px 0 0 1px;
    border: 1px solid #000;
    vertical-align: top;
    text-align: center;
    font-weight: normal;
    white-space: nowrap;
    background: #f0ffff;
}

th {
    background: #b9b795;
    box-shadow: inset 0 -1px #fff;
}

u {
    text-decoration-thickness: 1px;
    text-underline-offset: 3px;
}

.red,
.result {
    color: #f00;
}

.result {
    padding-left: 0;
    font-weight: bold;
}

.result u {
    text-decoration-thickness: 2px;
}

.move-handle,
.resize-handle {
    position: absolute;
    width: 19px;
    height: 19px;
    border: 1px solid #999;
    background: #fff;
}

.move-handle {
    left: -19px;
    top: -19px;
    padding: 1px;
}

.resize-handle {
    right: -19px;
    bottom: -19px;
}

.caret {
    position: absolute;
    right: -1px;
    top: 202px;
    width: 2px;
    height: 20px;
    background: #000;
}

.scrollbar {
    width: 21px;
    display: flex;
    flex-direction: column;
    align-items: flex-end;
    padding: 2px 1px 2px 0;
    background: #e2e2e2;
}

.scrollbar button,
.thumb {
    width: 19px;
    height: 19px;
    border: 1px solid #ababab;
    background: #fff;
}

.thumb {
    height: 29px;
    margin: 99px 0 auto;
}

/* Status bar */
.status {
    height: 27px;
    flex: none;
    display: flex;
    align-items: center;
    padding-left: 10px;
    border-top: 1px solid #c6c6c6;
    font-size: 13px;
}

.words {
    margin: 0 23px;
}

.proof {
    margin-right: 20px;
}

.views {
    display: flex;
    align-items: center;
    height: 26px;
    margin-left: auto;
    padding-right: 11px;
    font-size: 12px;
}

.focus {
    gap: 3px;
    margin-right: 14px;
}

.view {
    width: 50px;
    height: 26px;
}

.view.on {
    background: #c8c6c4;
}

.zoom-step {
    width: 22px;
    height: 26px;
}

.views input {
    width: 125px;
    height: 15px;
    margin: 0;
    appearance: none;
    background: linear-gradient(#aaa, #aaa) center / 100% 1px no-repeat;
}

.views input::-webkit-slider-thumb {
    appearance: none;
    width: 6px;
    height: 14px;
    background: #666;
}

.percent {
    margin-left: 11px;
}

/* Taskbar */
.taskbar {
    position: relative;
    height: 60px;
    flex: none;
    display: flex;
    justify-content: space-between;
    background: linear-gradient(90deg, #d9f0e6, #cdf2ee 15%, #caf2f2 50%, #cdeff5 75%, #c9f4ef);
    color: #1a1a1a;
}

.apps {
    display: flex;
    padding-left: 14px;
}

.app {
    position: relative;
    width: 55px;
    height: 60px;
}

.open::after,
.word::after {
    content: "";
    position: absolute;
    bottom: 6px;
    width: 8px;
    height: 4px;
    border-radius: 2px;
    background: #6e8887;
}

.word {
    width: 48px;
    height: 48px;
    margin: 6px 0 0 169px;
    border-radius: 4px;
    background: #e6f8f8;
}

.word::after {
    bottom: 0;
    width: 20px;
    background: #25858f;
}

.dell {
    font: bold 5px "Liberation Sans", sans-serif;
    fill: #fff;
}

.teams {
    font: bold 13px "Open Sans", sans-serif;
    fill: #fff;
}

.scribble {
    position: absolute;
    left: 778px;
    top: 4px;
}

.tray {
    display: flex;
    align-items: center;
    padding-right: 25px;
}

.tray-up {
    margin-right: 12px;
}

.unikey {
    width: 20px;
    height: 20px;
    border: 2px solid #d66;
    background: #f3dada;
    color: #c22;
    font-weight: 700;
    font-size: 15px;
    line-height: 16px;
    text-align: center;
}

.mic {
    width: 39px;
    height: 49px;
    margin: 0 15px 0 5px;
    border-radius: 4px;
    background: #e6f8fb;
}

.wifi {
    margin-left: 23px;
}

.sound {
    margin: 0 10px;
}

.clock {
    width: 86px;
    display: flex;
    flex-direction: column;
    align-items: flex-end;
    line-height: 20px;
    margin-right: 9px;
}

.badge {
    width: 20px;
    height: 20px;
    border-radius: 50%;
    background: #25858f;
    color: #fff;
    line-height: 20px;
    text-align: center;
}

.watermark {
    position: absolute;
    left: 0;
    top: 0;
    pointer-events: none;
}

.watermark text {
    font: 900 31px "DejaVu Serif", serif;
    fill: url(#wm);
    stroke: url(#wm);
    stroke-width: 2px;
    stroke-linejoin: round;
    filter: drop-shadow(1px 0 #222) drop-shadow(-1px 0 #222) drop-shadow(0 1px #222) drop-shadow(0 -1px #222);
}
```
